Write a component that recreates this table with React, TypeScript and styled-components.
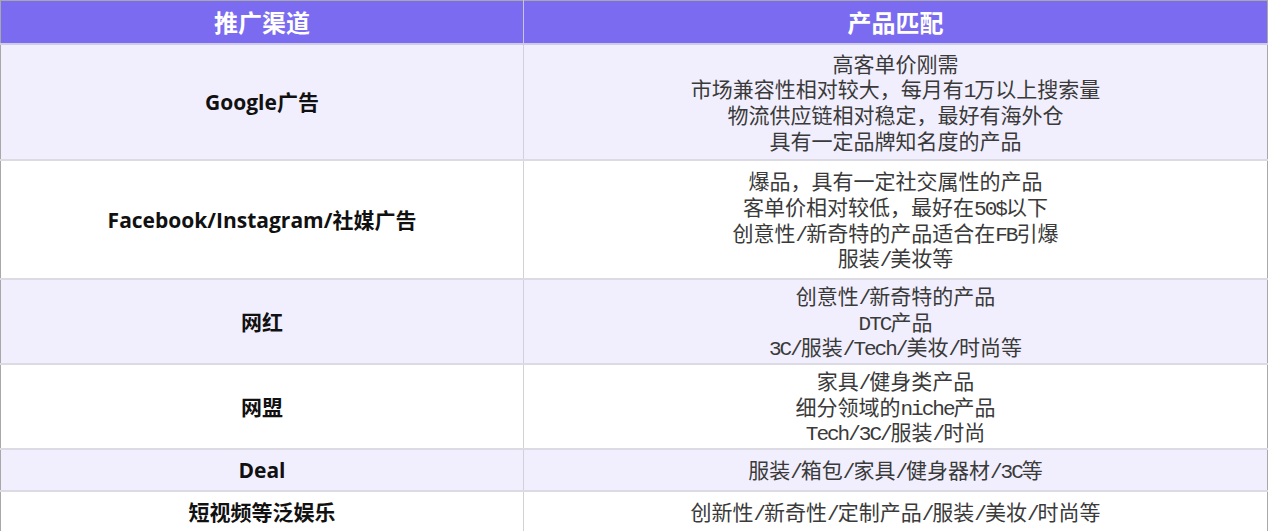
import styled, { createGlobalStyle } from 'styled-components';

const GlobalStyle = createGlobalStyle`
  html, body {
    margin: 0;
    padding: 0;
    background: #ffffff;
  }
  body {
    font-family: "Noto Sans CJK SC", sans-serif;
  }
`;

const Table = styled.table`
  width: 1268px;
  height: 531px;
  border-collapse: collapse;
  table-layout: fixed;
  border: 1px solid #a8a8a8;
`;

const HeadCell = styled.th`
  height: 42px;
  padding: 0;
  background: #7b6bf0;
  color: #ffffff;
  font-family: "Noto Sans CJK SC", sans-serif;
  font-size: 24px;
  line-height: 28px;
  font-weight: 700;
  text-align: center;
  vertical-align: middle;
  border-bottom: 2px solid #cfcde6;
  & + & {
    border-left: 1px solid #c8c6d8;
  }
`;

const Row = styled.tr<{ $shaded: boolean; $height: number }>`
  height: ${(p) => p.$height}px;
  background: ${(p) => (p.$shaded ? '#f1effd' : '#ffffff')};
  border-bottom: 2px solid #dcdbe3;
`;

const ChannelCell = styled.td`
  padding: 0;
  text-align: center;
  vertical-align: middle;
  font-family: "Open Sans", "Noto Sans CJK SC", sans-serif;
  font-size: 21px;
  line-height: 26px;
  font-weight: 700;
  color: #111111;
  border-right: 1px solid #d2d1da;
`;

const MatchCell = styled.td`
  padding: 0;
  text-align: center;
  vertical-align: middle;
  font-family: "Noto Sans CJK SC", sans-serif;
  font-size: 21px;
  font-weight: 400;
  color: #3a3a3a;
`;

const Line = styled.div`
  height: 25.7px;
  line-height: 25.7px;
  white-space: nowrap;
  overflow: visible;
`;

const Latin = styled.span`
  font-family: "Liberation Mono", monospace;
  letter-spacing: -2px;
  line-height: 1;
`;

const rows = [
  {
    channel: 'Google广告',
    height: 116,
    lines: ['高客单价刚需', '市场兼容性相对较大，每月有1万以上搜索量', '物流供应链相对稳定，最好有海外仓', '具有一定品牌知名度的产品'],
  },
  {
    channel: 'Facebook/Instagram/社媒广告',
    height: 119,
    lines: ['爆品，具有一定社交属性的产品', '客单价相对较低，最好在50$以下', '创意性/新奇特的产品适合在FB引爆', '服装/美妆等'],
  },
  {
    channel: '网红',
    height: 85,
    lines: ['创意性/新奇特的产品', 'DTC产品', '3C/服装/Tech/美妆/时尚等'],
  },
  {
    channel: '网盟',
    height: 85,
    lines: ['家具/健身类产品', '细分领域的niche产品', 'Tech/3C/服装/时尚'],
  },
  {
    channel: 'Deal',
    height: 42,
    lines: ['服装/箱包/家具/健身器材/3C等'],
  },
  {
    channel: '短视频等泛娱乐',
    height: 41,
    lines: ['创新性/新奇性/定制产品/服装/美妆/时尚等'],
  },
];

// ascii runs get the narrow mono face, the rest stays CJK
function renderLine(text: string) {
  return text.split(/([\x21-\x7e]+)/).map((part, i) =>
    /^[\x21-\x7e]+$/.test(part) ? <Latin key={i}>{part}</Latin> : part
  );
}

export default function App() {
  return (
    <>
      <GlobalStyle />
      <Table>
        <colgroup>
          <col style={{ width: '523px' }} />
          <col />
        </colgroup>
        <thead>
          <tr>
            <HeadCell>推广渠道</HeadCell>
            <HeadCell>产品匹配</HeadCell>
          </tr>
        </thead>
        <tbody>
          {rows.map((row, idx) => (
            <Row key={row.channel} $shaded={idx % 2 === 0} $height={row.height}>
              <ChannelCell>{row.channel}</ChannelCell>
              <MatchCell>
                {row.lines.map((line) => (
                  <Line key={line}>{renderLine(line)}</Line>
                ))}
              </MatchCell>
            </Row>
          ))}
        </tbody>
      </Table>
    </>
  );
}
